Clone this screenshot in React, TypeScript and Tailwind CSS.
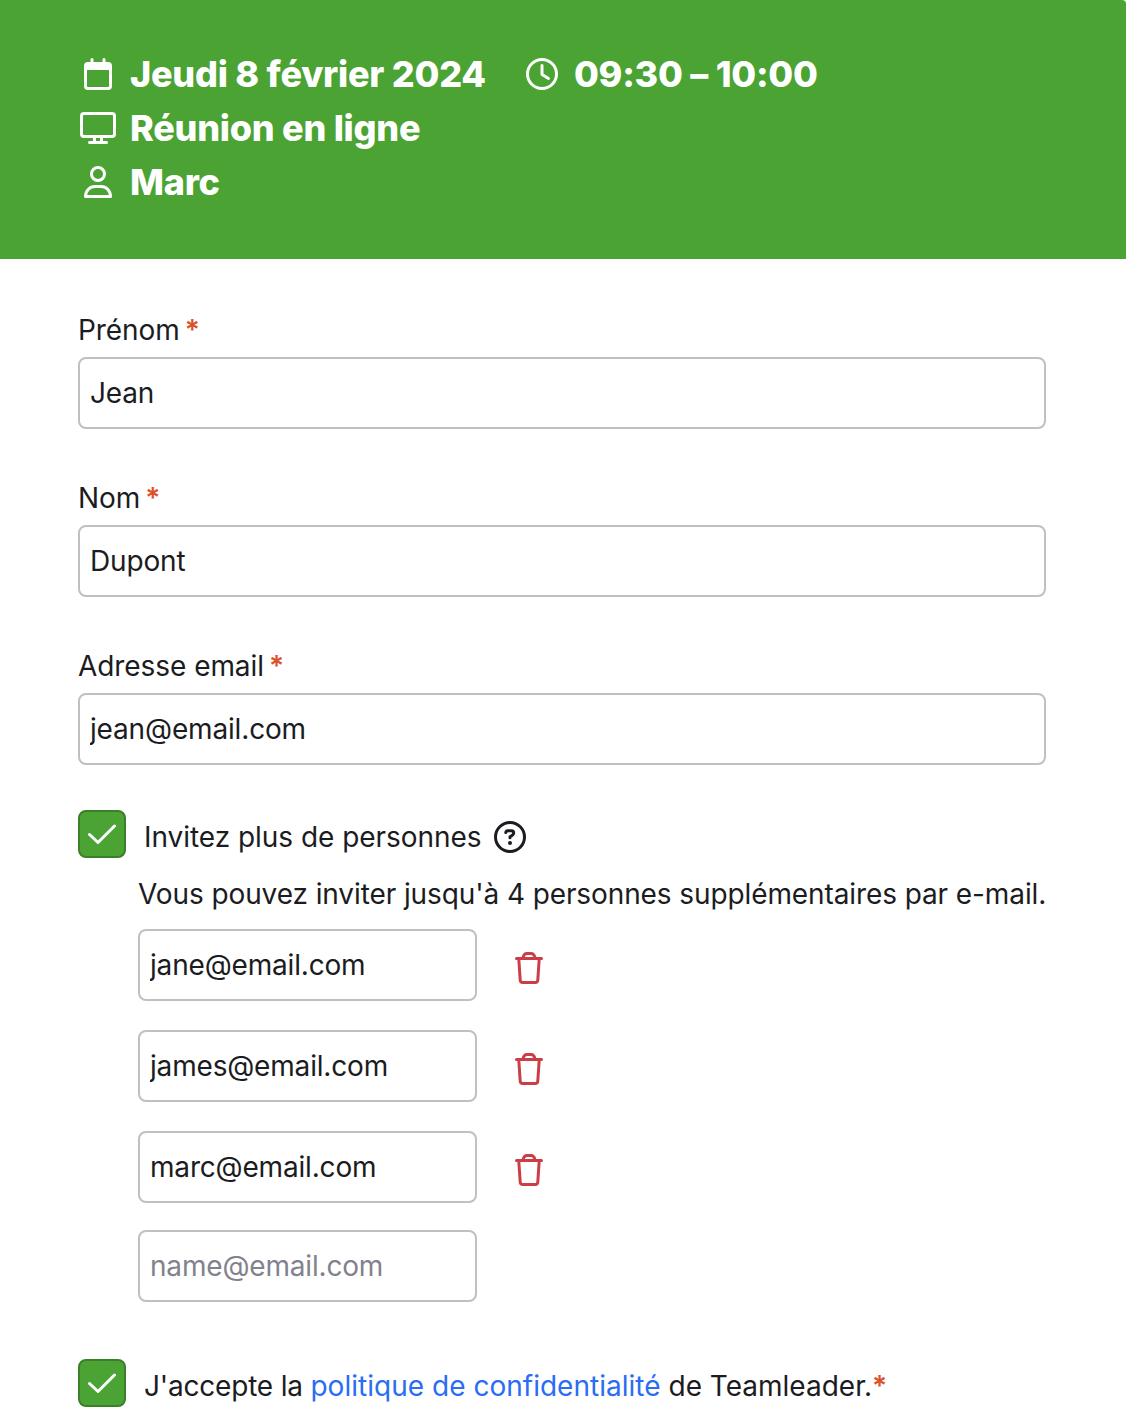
import type { ReactNode } from 'react';

function CalendarIcon() {
  return (
    <svg width="28" height="32" viewBox="0 0 28 32" fill="none">
      <rect x="1.5" y="5.5" width="25" height="25" rx="2.5" stroke="white" strokeWidth="3" />
      <path d="M1.5 7h25v5h-25z" fill="white" />
      <path d="M8 1.5V6M20 1.5V6" stroke="white" strokeWidth="3" strokeLinecap="round" />
    </svg>
  );
}

function MonitorIcon() {
  return (
    <svg width="36" height="32" viewBox="0 0 36 32" fill="none" stroke="white" strokeWidth="3">
      <rect x="1.5" y="1.5" width="33" height="23" rx="2.5" />
      <path d="M14.5 25v5M21.5 25v5" />
      <path d="M9.5 30.5h17" strokeLinecap="round" />
    </svg>
  );
}

function PersonIcon() {
  return (
    <svg width="28" height="32" viewBox="0 0 28 32" fill="none" stroke="white" strokeWidth="3">
      <circle cx="14" cy="8" r="6.5" />
      <path d="M1.5 30.5C1.5 24.5 6 20.5 11 20.5h6c5 0 9.5 4 9.5 10z" strokeLinejoin="round" />
    </svg>
  );
}

function ClockIcon() {
  return (
    <svg width="32" height="32" viewBox="0 0 32 32" fill="none" stroke="white" strokeWidth="3">
      <circle cx="16" cy="16" r="14.5" />
      <path d="M16 7.5V16.5L22.5 20.5" strokeLinecap="round" strokeLinejoin="round" />
    </svg>
  );
}

function HelpIcon() {
  return (
    <svg className="ml-3" width="32" height="32" viewBox="0 0 32 32" fill="none" stroke="#1b1c22" strokeWidth="3">
      <circle cx="16" cy="16" r="14.5" />
      <path d="M11.8 11.5C12 10.3 12.6 9.7 13.7 9.7H17.5C18.9 9.7 19.7 10.6 19.7 12C19.7 13.2 19.1 13.8 18 14.5L16 15.8V16.7" strokeLinecap="round" strokeLinejoin="round" />
      <circle cx="16" cy="22" r="2" fill="#1b1c22" stroke="none" />
    </svg>
  );
}

function TrashIcon() {
  return (
    <svg width="28" height="32" viewBox="0 0 28 32" fill="none" stroke="#cb3e46" strokeWidth="3" strokeLinecap="round" strokeLinejoin="round">
      <path d="M1.5 6.5h25" />
      <path d="M8 6C8.5 3.2 9.8 1.5 12 1.5h4c2.2 0 3.5 1.7 4 4.5" />
      <path d="M3.8 7l1.4 21c.1 1.500 1 2.500 2.500 2.500h12.600c1.500 0 2.400-1 2.500-2.500L24.200 7" />
    </svg>
  );
}

function CheckedBox() {
  return (
    <span role="checkbox" aria-checked="true" className="flex size-12 shrink-0 items-center justify-center rounded-lg border-2 border-[#3a8029] bg-[#4aa333]">
      <svg width="28" height="20" viewBox="0 0 28 20" fill="none">
        <path d="M1.5 10.5L10 18.5L26.5 2" stroke="white" strokeWidth="3" strokeLinecap="round" strokeLinejoin="round" />
      </svg>
    </span>
  );
}

function Star() {
  return <span className="font-semibold text-[#da532c]">*</span>;
}

function HeaderItem({ icon, children }: { icon: ReactNode; children: ReactNode }) {
  return (
    <div className="flex h-[54px] items-center">
      <span className="mr-[14px] flex w-9 justify-center">{icon}</span>
      <span>{children}</span>
    </div>
  );
}

function Field({ label, value }: { label: string; value: string }) {
  return (
    <div className="mb-[42px]">
      <label className="flex h-[54px] items-center gap-[5px] tracking-[-0.06px]">
        <span>{label}</span>
        <Star />
      </label>
      <input className="block h-[72px] w-full rounded-lg border-2 border-[#bfbfc4] bg-white px-2.5 tracking-[-0.16px] outline-none" defaultValue={value} />
    </div>
  );
}

function Guest({ email }: { email: string }) {
  return (
    <div className="mb-[29px] flex h-[72px] items-center">
      <input className="h-[72px] w-[339px] rounded-lg border-2 border-[#bfbfc4] bg-white px-2.5 tracking-[-0.18px] outline-none" defaultValue={email} />
      <button aria-label="Supprimer" className="mt-[6px] ml-[38px]">
        <TrashIcon />
      </button>
    </div>
  );
}

export default function App() {
  return (
    <main className="h-[1428px] w-[1126px] overflow-hidden bg-white font-['Inter',sans-serif] text-[28px] leading-9 text-[#1b1c22]">
      <header className="h-[259px] rounded-tr-[4px] bg-[#4aa333] px-20 pt-[47px] text-[36px] font-extrabold tracking-[-0.25px] whitespace-nowrap text-white">
        <div className="flex gap-[38px]">
          <HeaderItem icon={<CalendarIcon />}>Jeudi 8 février 2024</HeaderItem>
          <HeaderItem icon={<ClockIcon />}>09:30 – 10:00</HeaderItem>
        </div>
        <HeaderItem icon={<MonitorIcon />}>Réunion en ligne</HeaderItem>
        <HeaderItem icon={<PersonIcon />}>Marc</HeaderItem>
      </header>
      <form className="pt-11 pr-20 pl-[78px] whitespace-nowrap">
        <Field label="Prénom" value="Jean" />
        <Field label="Nom" value="Dupont" />
        <Field label="Adresse email" value="jean@email.com" />
        <div className="mt-[45px] flex h-12 items-center">
          <CheckedBox />
          <span className="mt-[6px] ml-[18px] flex items-center tracking-[-0.04px]">
            Invitez plus de personnes
            <HelpIcon />
          </span>
        </div>
        <div className="mt-[18px] ml-[60px]">
          <p className="mb-[17px] tracking-[-0.1px]">Vous pouvez inviter jusqu'à 4 personnes supplémentaires par e-mail.</p>
          <Guest email="jane@email.com" />
          <Guest email="james@email.com" />
          <Guest email="marc@email.com" />
          <input className="-mt-[2px] block h-[72px] w-[339px] rounded-lg border-2 border-[#bfbfc4] bg-white px-2.5 tracking-[-0.18px] outline-none placeholder:text-[#82828c]" placeholder="name@email.com" />
        </div>
        <div className="mt-[57px] flex h-12 items-center">
          <CheckedBox />
          <span className="mt-[6px] ml-[18px]">
            <span className="tracking-[-0.2px]">J'accepte la </span>
            <a className="tracking-[0.02px] text-[#2a6df4]">politique de confidentialité</a> de Teamleader.<Star />
          </span>
        </div>
      </form>
    </main>
  );
}
